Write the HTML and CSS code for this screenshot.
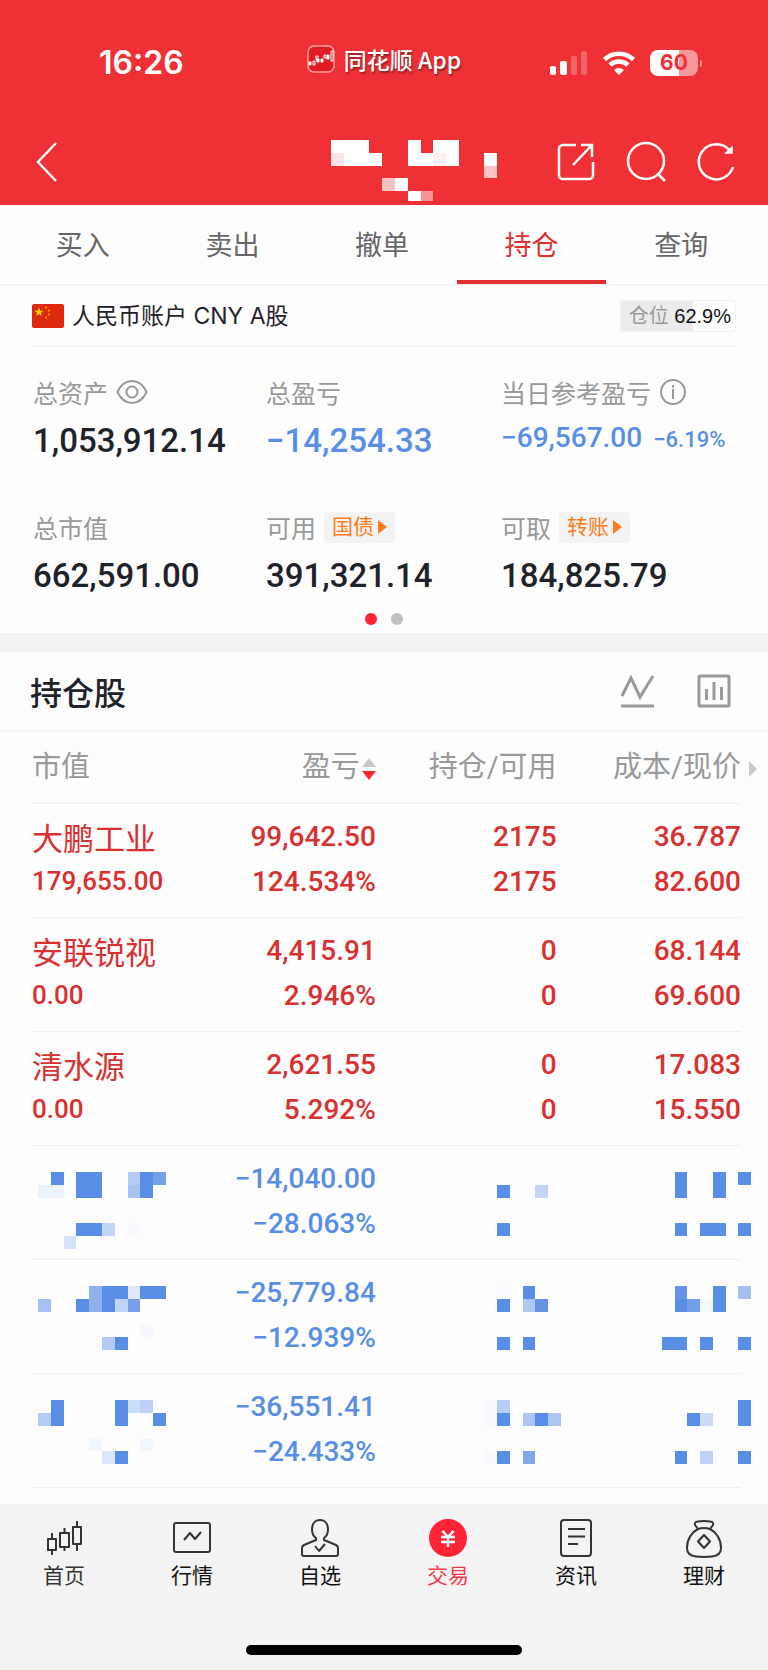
FILE: index.html
```html
<!DOCTYPE html>
<html lang="zh-CN">
<head>
  <meta charset="UTF-8" />
  <meta name="viewport" content="width=device-width, initial-scale=1.0" />
  <title>持仓</title>
  <link rel="stylesheet" href="styles.css">
</head>
<body>
  <header class="top">
    <div class="status">
      <span class="time">16:26</span>
      <span class="app-name">
        <svg width="28" height="28" viewBox="0 0 28 28" fill="none" stroke="#fff">
          <rect x="1" y="1" width="26" height="26" rx="6" fill="#e01b22" stroke="#f9a0a2" stroke-width="1.5"/>
          <path d="M2 17h2v3h-2zM10 14h2v3h-2zM14 14h2v3h-2zM20 10h2v4h-2z" fill="#fff" stroke-width="1"/>
          <path d="M6 16h2v4h-2zM9 11h2v4h-2zM17 10h2v3h-2zM24 6h2v10h-2z" stroke-width="1"/>
        </svg>
        同花顺 App
      </span>
      <span class="status-icons">
        <svg width="38" height="26" viewBox="0 0 38 26" fill="#fff">
          <rect x="0" y="16" width="6" height="9" rx="2"/>
          <rect x="10" y="11" width="7" height="14" rx="2"/>
          <rect x="21" y="6" width="6" height="19" rx="2" opacity=".25"/>
          <rect x="31" y="1" width="6" height="24" rx="2" opacity=".25"/>
        </svg>
        <svg width="34" height="26" viewBox="0 0 34 26">
          <path d="M2.500 9.500a21 21 0 0 1 29 0M8 15a13.500 13.500 0 0 1 18 0" fill="none" stroke="#fff" stroke-width="4.500"/>
          <path d="M17 25l-5-5a7.500 7.500 0 0 1 10 0z" fill="#fff"/>
        </svg>
        <span class="battery">60</span>
      </span>
    </div>
    <nav class="bar">
      <button class="icon-btn" aria-label="返回">
        <svg width="24" height="42" viewBox="0 0 24 42" fill="none" stroke="#fff" stroke-width="2.500"><path d="M22 2L4 21l18 19"/></svg>
      </button>
      <svg class="pixels head-pixels" width="179" height="64" viewBox="0 0 14 5" preserveAspectRatio="none" fill="#fff">
        <path d="M0 0h3v1h1v1h-4zM6 0h1v1h1v-1h2v2h-4zM12 1h1v1h-1zM5 3h1v1h-1zM6 4h1v.800h-1z"/>
        <path d="M0 1h1v1h-1z" fill="#fde4e6"/>
        <path d="M8 1h1v1h-1z" fill="#feeff0"/>
        <path d="M12 2h1v1h-1zM4 3h1v1h-1z" fill="#f9c3c6"/>
        <path d="M7 4h1v.800h-1z" fill="#f79396"/>
      </svg>
      <button class="icon-btn" aria-label="分享">
        <svg width="40" height="42" viewBox="0 0 40 42" fill="none" stroke="#fff" stroke-width="2.500"><path d="M20 4H7a4 4 0 0 0-4 4v26a4 4 0 0 0 4 4h26a4 4 0 0 0 4-4V21M25 4h11v12M36 4L17 24"/></svg>
      </button>
      <button class="icon-btn" aria-label="搜索">
        <svg width="42" height="42" viewBox="0 0 42 42" fill="none" stroke="#fff" stroke-width="2.500"><circle cx="21" cy="20" r="18"/><path d="M33 33l7 7"/></svg>
      </button>
      <button class="icon-btn" aria-label="刷新">
        <svg width="40" height="42" viewBox="0 0 40 42" fill="none" stroke="#fff" stroke-width="2.500"><path d="M37 26A17.500 17.500 0 1 1 34 10"/><path d="M36 6v6h-6z" fill="#fff" stroke-width="1.500"/></svg>
      </button>
    </nav>
  </header>

  <nav class="tabs">
    <a href="#">买入</a>
    <a href="#">卖出</a>
    <a href="#">撤单</a>
    <a href="#" class="active">持仓</a>
    <a href="#">查询</a>
  </nav>

  <section class="account">
    <div class="account-row">
      <svg width="32" height="24" viewBox="0 0 32 24">
        <rect width="32" height="24" rx="2" fill="#de2910"/>
        <path d="M7 3.500l1.200 3.200h3.400l-2.700 2 1 3.300-2.900-2-2.900 2 1-3.300-2.700-2h3.400z" fill="#ffde00"/>
        <g fill="#ffb000"><circle cx="14" cy="3.500" r="1"/><circle cx="17" cy="6.500" r="1"/><circle cx="17" cy="10.500" r="1"/><circle cx="14" cy="13.500" r="1"/></g>
      </svg>
      <span class="account-name">人民币账户 CNY A股</span>
      <span class="position"><span>仓位</span> 62.9%</span>
    </div>
    <div class="summary">
      <div class="item">
        <div class="label">总资产
          <svg width="32" height="26" viewBox="0 0 32 26" fill="none" stroke="#999" stroke-width="2"><path d="M1.500 13C5 5.500 10 2 16 2s11 3.500 14.500 11C27 20.500 22 24 16 24S5 20.500 1.500 13z"/><circle cx="16" cy="13" r="5.500"/></svg>
        </div>
        <div class="value">1,053,912.14</div>
      </div>
      <div class="item">
        <div class="label">总盈亏</div>
        <div class="value down">−14,254.33</div>
      </div>
      <div class="item">
        <div class="label">当日参考盈亏
          <svg width="28" height="28" viewBox="0 0 28 28" fill="none" stroke="#999" stroke-width="2"><circle cx="14" cy="14" r="12"/><path d="M14 11v10M14 7v2.500"/></svg>
        </div>
        <div class="value small down">−69,567.00 <span class="rate">−6.19%</span></div>
      </div>
      <div class="item">
        <div class="label">总市值</div>
        <div class="value">662,591.00</div>
      </div>
      <div class="item">
        <div class="label">可用
          <button class="chip">国债<svg width="9" height="14" viewBox="0 0 9 14" fill="#ff7a1a"><path d="M0 0l9 7-9 7z"/></svg></button>
        </div>
        <div class="value">391,321.14</div>
      </div>
      <div class="item">
        <div class="label">可取
          <button class="chip">转账<svg width="9" height="14" viewBox="0 0 9 14" fill="#ff7a1a"><path d="M0 0l9 7-9 7z"/></svg></button>
        </div>
        <div class="value">184,825.79</div>
      </div>
    </div>
    <div class="dots"><i class="on"></i><i></i></div>
  </section>

  <main class="holdings">
    <div class="holdings-head">
      <h2>持仓股</h2>
      <button class="icon-btn" aria-label="走势">
        <svg width="36" height="36" viewBox="0 0 36 36" fill="none" stroke="#999" stroke-width="3"><path d="M2 23l9-18 9 19L33 3M1 33h33"/></svg>
      </button>
      <button class="icon-btn" aria-label="统计">
        <svg width="36" height="36" viewBox="0 0 36 36" fill="none" stroke="#999" stroke-width="3"><rect x="3" y="3" width="30" height="30" rx="1"/><path d="M10.500 16v11M18 9v18M25.500 14v13"/></svg>
      </button>
    </div>
    <table>
      <thead>
        <tr>
          <th>市值</th>
          <th>盈亏<svg class="sort" width="14" height="24" viewBox="0 0 14 24"><path d="M7 1l7 9H0z" fill="#c8c8c8"/><path d="M7 23l7-9H0z" fill="#ff2436"/></svg></th>
          <th>持仓/可用</th>
          <th>成本/现价<svg class="more" width="8" height="16" viewBox="0 0 8 16"><path d="M0 0l8 8-8 8z" fill="#c8c8c8"/></svg></th>
        </tr>
      </thead>
      <tbody>
        <tr>
          <td><span class="name">大鹏工业</span><span class="amount">179,655.00</span></td>
          <td><span>99,642.50</span><span>124.534%</span></td>
          <td><span>2175</span><span>2175</span></td>
          <td><span>36.787</span><span>82.600</span></td>
        </tr>
        <tr>
          <td><span class="name">安联锐视</span><span class="amount">0.00</span></td>
          <td><span>4,415.91</span><span>2.946%</span></td>
          <td><span>0</span><span>0</span></td>
          <td><span>68.144</span><span>69.600</span></td>
        </tr>
        <tr>
          <td><span class="name">清水源</span><span class="amount">0.00</span></td>
          <td><span>2,621.55</span><span>5.292%</span></td>
          <td><span>0</span><span>0</span></td>
          <td><span>17.083</span><span>15.550</span></td>
        </tr>
        <tr class="down">
          <td>
            <svg class="pixels" width="128" height="77" viewBox="0 0 10 6" fill="#588ee5">
              <path d="M1 0h1v1h-1zM3 0h2v2h-2zM8 0h1v2h-1zM3 4h2v1h-2z"/>
              <path d="M0 1h2v1h-2z" fill="#ebf2fc"/>
              <path d="M7 0h1v1h-1z" fill="#b4cbf3"/>
              <path d="M7 1h1v1h-1z" fill="#a8c3f1"/>
              <path d="M9 0h1v1h-1z" fill="#759fe8"/>
              <path d="M5 4h1v1h-1z" fill="#c2d5f5"/>
              <path d="M2 5h1v1h-1z" fill="#d4e1f8"/>
              <path d="M7 4h1v1h-1z" fill="#f8fafe"/>
            </svg>
          </td>
          <td><span>−14,040.00</span><span>−28.063%</span></td>
          <td>
            <svg class="pixels" width="77" height="77" viewBox="0 0 6 6" fill="#588ee5">
              <path d="M1 1h1v1h-1zM1 4h1v1h-1z"/>
              <path d="M4 1h1v1h-1z" fill="#c4d4f4"/>
            </svg>
          </td>
          <td>
            <svg class="pixels" width="89" height="77" viewBox="0 0 7 6" fill="#588ee5">
              <path d="M1 0h1v2h-1zM4 0h1v2h-1zM6 0h1v1h-1zM1 4h1v1h-1zM3 4h2v1h-2zM6 4h1v1h-1z"/>
            </svg>
          </td>
        </tr>
        <tr class="down">
          <td>
            <svg class="pixels" width="128" height="77" viewBox="0 0 10 6" fill="#588ee5">
              <path d="M3 1h1v1h-1zM5 0h2v1h-1v1h-1zM8 0h2v1h-2zM6 4h1v1h-1z"/>
              <path d="M0 1h1v1h-1z" fill="#a6c1f1"/>
              <path d="M4 0h1v2h-1z" fill="#91b1ec"/>
              <path d="M6 1h1v1h-1z" fill="#c2d5f5"/>
              <path d="M7 0h1v1h-1z" fill="#dfe8f9"/>
              <path d="M7 1h1v1h-1z" fill="#78a0e8"/>
              <path d="M8 3h1v1h-1z" fill="#f5f9fe"/>
              <path d="M5 4h1v1h-1z" fill="#b4c9f3"/>
            </svg>
          </td>
          <td><span>−25,779.84</span><span>−12.939%</span></td>
          <td>
            <svg class="pixels" width="77" height="77" viewBox="0 0 6 6" fill="#588ee5">
              <path d="M1 1h1v1h-1zM3 0h1v1h-1zM1 4h1v1h-1zM3 4h1v1h-1z"/>
              <path d="M3 1h1v1h-1z" fill="#b0c9f3"/>
              <path d="M4 1h1v1h-1z" fill="#6492e5"/>
              <path d="M1 0h1v1h-1z" fill="#fafbfe"/>
            </svg>
          </td>
          <td>
            <svg class="pixels" width="89" height="77" viewBox="0 0 7 6" fill="#588ee5">
              <path d="M1 1h1v1h-1zM4 0h1v2h-1zM0 4h2v1h-2zM3 4h1v1h-1zM6 4h1v1h-1z"/>
              <path d="M1 0h1v1h-1z" fill="#6794e6"/>
              <path d="M2 1h1v1h-1z" fill="#749de8"/>
              <path d="M3 1h1v1h-1z" fill="#f3f7fe"/>
              <path d="M6 0h1v1h-1z" fill="#a4bff0"/>
            </svg>
          </td>
        </tr>
        <tr class="down">
          <td>
            <svg class="pixels" width="128" height="77" viewBox="0 0 10 6" fill="#588ee5">
              <path d="M1 0h1v2h-1zM6 0h1v2h-1zM9 1h1v1h-1zM6 4h1v1h-1z"/>
              <path d="M0 1h1v1h-1z" fill="#b4cbf3"/>
              <path d="M7 0h1v1h-1z" fill="#cddcf7"/>
              <path d="M8 0h1v1h-1z" fill="#bdd1f4"/>
              <path d="M4 3h1v1h-1zM8 3h1v1h-1z" fill="#f2f6fd"/>
              <path d="M5 4h1v1h-1z" fill="#dae6f9"/>
            </svg>
          </td>
          <td><span>−36,551.41</span><span>−24.433%</span></td>
          <td>
            <svg class="pixels" width="77" height="77" viewBox="0 0 6 6" fill="#588ee5">
              <path d="M1 1h1v1h-1zM4 1h1v1h-1zM1 4h1v1h-1z"/>
              <path d="M0 0h1v2h-1zM0 4h1v1h-1z" fill="#f8fafe"/>
              <path d="M1 0h1v1h-1z" fill="#b8cff4"/>
              <path d="M3 1h1v1h-1zM5 1h1v1h-1z" fill="#acc5f2"/>
              <path d="M3 4h1v1h-1z" fill="#80a8ea"/>
            </svg>
          </td>
          <td>
            <svg class="pixels" width="89" height="77" viewBox="0 0 7 6" fill="#588ee5">
              <path d="M2 1h1v1h-1zM6 0h1v2h-1zM1 4h1v1h-1zM6 4h1v1h-1z"/>
              <path d="M3 1h1v1h-1z" fill="#cddbf6"/>
              <path d="M3 4h1v1h-1z" fill="#bed2f5"/>
            </svg>
          </td>
        </tr>
      </tbody>
    </table>
  </main>

  <footer class="dock">
    <nav class="dock-nav">
      <a href="#" class="soft">
        <svg width="40" height="40" viewBox="0 0 40 40"><path d="M4 21h8v11H4zM8 15v6M8 32v5M16 15h9v14h-9zM20.500 10v5M20.500 29v4M29 9h8v17h-8zM33 3v6M33 26v7"/></svg>
        首页
      </a>
      <a href="#">
        <svg width="40" height="40" viewBox="0 0 40 40"><rect x="2" y="5" width="36" height="29" rx="2"/><path d="M12 22l6-7 5 6 6-7"/></svg>
        行情
      </a>
      <a href="#">
        <svg width="40" height="40" viewBox="0 0 40 40"><path d="M16 20c-3-2-4-5-4-8.500C12 6 15 2 20 2s8 4 8 9.500c0 3.500-1 6.500-4 8.500v2l12 5q2 1 2 3v6q0 2-2 2H4q-2 0-2-2v-6q0-2 2-3l12-5z"/><path d="M15 28l4 5 6-7"/></svg>
        自选
      </a>
      <a href="#" class="active">
        <svg width="40" height="40" viewBox="0 0 40 40"><circle cx="20" cy="20" r="19" fill="#ff2436" stroke="none"/><path d="M14.500 13l5.500 6 5.500-6M20 19v10M13 19h14M13 24h14" stroke="#fff" stroke-width="2.500"/></svg>
        交易
      </a>
      <a href="#">
        <svg width="40" height="40" viewBox="0 0 40 40"><rect x="5" y="2" width="30" height="36" rx="3"/><path d="M12 11h17M12 18.500h17M12 26h10"/></svg>
        资讯
      </a>
      <a href="#">
        <svg width="40" height="40" viewBox="0 0 40 40"><path d="M14 11l-3-4q-1-3 3-3.500 6-1 12 0 4 .500 3 3.500l-3 4c6 3 11 10 11 19 0 6-4 8-9 8.500q-8 .800-16 0C7 38 3 36 3 30c0-9 5-16 11-19zM14 11q6-2 12 0"/><path d="M20 17l6 6.500-6 6.500-6-6.500z"/></svg>
        理财
      </a>
    </nav>
    <div class="home-bar"></div>
  </footer>
</body>
</html>
```

FILE: styles.css
```css
* { box-sizing: border-box; margin: 0; padding: 0; }
body {
  min-height: 100vh; display: flex; flex-direction: column;
  font-family: Roboto, "Noto Sans CJK SC", sans-serif; background: #fdfdfe; color: #1f2329;
}
a { color: inherit; text-decoration: none; }
button { border: none; background: none; font: inherit; color: inherit; cursor: pointer; }
svg { display: block; flex: none; }
.icon-btn { display: block; }
.pixels { shape-rendering: crispEdges; }

.top { background: #ef3035; color: #fff; }
.status {
  display: grid; grid-template-columns: 1fr auto 1fr; align-items: center;
  height: 120px; padding: 5px 70px 0;
}
.time { margin-left: 29px; font: 600 32px Inter, sans-serif; }
.app-name {
  display: flex; align-items: center; gap: 9px; margin-bottom: 8px;
  font: 500 23px "Noto Sans CJK SC", sans-serif; text-shadow: 1px 2px 2px rgba(0,0,0,0.4);
}
.status-icons { display: flex; justify-content: flex-end; align-items: center; gap: 14px; }
.battery {
  position: relative; width: 48px; border-radius: 8px; text-align: center;
  background: linear-gradient(90deg, #fff 60%, #f9979a 60%);
  color: #ef3035; font: 700 21px/26px Inter, sans-serif;
}
.battery::after {
  content: ""; position: absolute; left: 50px; top: 10px; width: 2px; height: 7px;
  border-radius: 0 2px 2px 0; background: #f9979a;
}
.bar { display: flex; align-items: center; gap: 29px; height: 85px; padding: 0 32px 2px 34px; }
.head-pixels { margin: 20px 17px 0 auto; }

.tabs { display: flex; padding: 0 12px 0 8px; border-bottom: 1px solid #ececee; }
.tabs a {
  flex: 1; height: 79px; line-height: 82px; text-align: center;
  font-size: 27px; color: #666; border-bottom: 4px solid transparent;
}
.tabs .active { color: #e02f2f; border-bottom-color: #e02f2f; }

.account-row {
  display: flex; align-items: center; gap: 8px; height: 62px;
  margin: 0 32px; border-bottom: 1px solid #f0f0f2;
}
.account-name { font: 23px/30px Inter, "Noto Sans CJK SC", sans-serif; }
.position {
  margin-left: auto; padding: 0 4px 0 8px; border: 1px solid #f2f2f4; border-radius: 2px;
  background: linear-gradient(90deg, #ebebee 62.9%, #fff 62.9%);
  font: 20px/30px "Liberation Sans", "Noto Sans CJK SC", sans-serif; color: #111;
}
.position span { color: #999; }

.summary {
  display: grid; grid-template-columns: 233px 1fr 234px; row-gap: 32px;
  padding: 22px 33px 0;
}
.label { display: flex; align-items: center; gap: 8px; height: 46px; font-size: 25px; color: #999; }
.value { height: 57px; line-height: 52px; font-size: 33px; font-weight: 500; white-space: nowrap; }
.value.small { font-size: 28px; line-height: 46px; }
.rate { margin-left: 4px; font-size: 22px; }
.down { color: #588ee5; }
.chip {
  display: flex; align-items: center; gap: 4px; padding: 0 8px; border-radius: 4px;
  background: #f3f3f4; color: #ff7a1a; font-size: 21px; line-height: 31px;
}
.dots { display: flex; justify-content: center; gap: 14px; height: 26px; padding-top: 6px; }
.dots i { width: 12px; height: 12px; border-radius: 50%; background: #c0c0c0; }
.dots .on { background: #ff2436; }

.holdings { border-top: 19px solid #f3f3f3; }
.holdings-head {
  display: flex; align-items: center; gap: 40px; height: 80px;
  padding: 0 36px 0 30px; border-bottom: 2px solid #f5f5f6;
}
.holdings-head h2 { margin-right: auto; font-size: 32px; font-weight: 500; }

table { width: calc(100% - 59px); margin: 0 27px 0 32px; border-collapse: collapse; table-layout: fixed; }
th, td { text-align: right; border-bottom: 1px solid #efeff1; white-space: nowrap; }
th { height: 71px; font-size: 29px; line-height: 40px; font-weight: 400; color: #999; }
th:first-child, td:first-child { width: 22%; text-align: left; }
th:nth-child(2) { width: 26.500%; }
th:nth-child(3) { width: 25.500%; }
th svg { display: inline-block; }
.sort { margin-left: 2px; vertical-align: -4px; }
.more { margin: 0 -16px 0 8px; }
td { height: 114px; padding-top: 10px; vertical-align: top; color: #d93030; }
td span { display: block; font-size: 28px; line-height: 45px; font-weight: 500; }
td .name { font-size: 31px; font-weight: 400; line-height: 51px; }
td .amount { font-size: 26px; line-height: 32px; }
tr.down td { color: #588ee5; }
td .pixels { margin: 16px 0 0 6px; }
td:nth-child(3) .pixels { margin: 16px -4px 0 auto; }
td:last-child .pixels { margin: 16px -10px 0 auto; }

.dock { margin-top: auto; height: 166px; background: #f3f3f3; display: flex; flex-direction: column; }
.dock-nav { display: flex; padding-top: 14px; }
.dock-nav a {
  flex: 1; display: flex; flex-direction: column; align-items: center; gap: 3px;
  font-size: 21px; line-height: 30px; color: #111;
}
.dock-nav svg { fill: none; stroke: #333; stroke-width: 2; stroke-linejoin: round; }
.dock-nav .soft { color: #333; }
.dock-nav .active { color: #f5384a; }
.home-bar { width: 36%; height: 10px; margin: auto auto 15px; border-radius: 5px; background: #000; }
```
